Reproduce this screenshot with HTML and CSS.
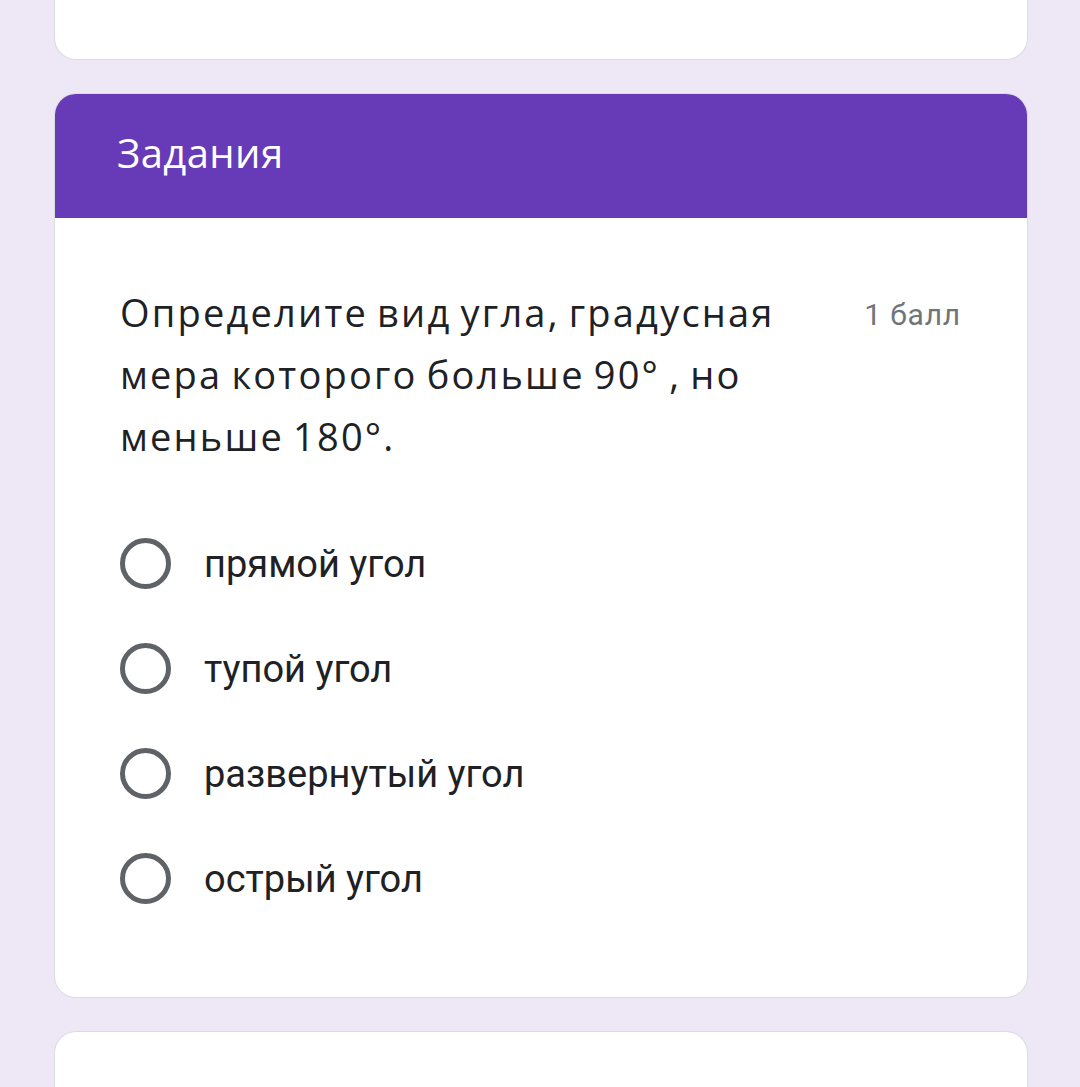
FILE: index.html
```html
<!DOCTYPE html>
<html lang="ru">
<head>
<meta charset="utf-8">
<title>Задания</title>
<link rel="stylesheet" href="styles.css">
</head>
<body>
<div class="page">
  <div class="card card-top"></div>
  <section class="card section">
    <header class="section-header">Задания</header>
    <div class="section-body">
      <div class="question">
        <div class="question-title">Определите вид угла, градусная мера которого больше 90° , но меньше 180°.</div>
        <div class="points">1 балл</div>
      </div>
      <ul class="options">
        <li class="option"><span class="radio"></span><span class="label">прямой угол</span></li>
        <li class="option"><span class="radio"></span><span class="label">тупой угол</span></li>
        <li class="option"><span class="radio"></span><span class="label">развернутый угол</span></li>
        <li class="option"><span class="radio"></span><span class="label">острый угол</span></li>
      </ul>
    </div>
  </section>
  <div class="card card-next"></div>
</div>
</body>
</html>
```
FILE: styles.css
```css
html, body {
  margin: 0;
  padding: 0;
  background: #ede7f6;
  height: 100%;
  overflow: hidden;
}

.page {
  display: flex;
  flex-direction: column;
  gap: 33px;
  padding: 0 52px 0 54px;
}

.card {
  background: #ffffff;
  border: 1px solid #dadce0;
  border-radius: 22px;
}

.card-top {
  height: 59px;
  border-top: none;
  border-radius: 0 0 22px 22px;
}

.section {
  overflow: hidden;
}

.section-header {
  height: 125px;
  margin: -1px -1px 0;
  background: #673ab7;
  color: #ffffff;
  font-family: "Open Sans", "Roboto", sans-serif;
  font-size: 40px;
  letter-spacing: 0.4px;
  display: flex;
  align-items: center;
  padding: 0 0 6px 63px;
  box-sizing: border-box;
}

.section-body {
  padding: 63px 66px 66px 65px;
}

.question {
  display: flex;
  align-items: flex-start;
}

.question-title {
  flex: 0 1 700px;
  font-family: "Open Sans", "Roboto", sans-serif;
  font-size: 38px;
  letter-spacing: 2.2px;
  word-spacing: -3px;
  line-height: 62px;
  color: #202124;
}

.points {
  margin-left: auto;
  padding-top: 3px;
  font-family: "Roboto", sans-serif;
  font-size: 30px;
  letter-spacing: 0.8px;
  line-height: 62px;
  color: #70757a;
  white-space: nowrap;
}

.options {
  list-style: none;
  margin: 44px 0 0;
  padding: 0;
}

.option {
  height: 105px;
  display: flex;
  align-items: center;
  gap: 33px;
}

.radio {
  width: 51px;
  height: 51px;
  box-sizing: border-box;
  border: 5px solid #5f6368;
  border-radius: 50%;
  flex: none;
}

.label {
  font-family: "Roboto", sans-serif;
  font-size: 38px;
  color: #202124;
}

.card-next {
  height: 80px;
  border-bottom: none;
  border-radius: 22px 22px 0 0;
}
```
